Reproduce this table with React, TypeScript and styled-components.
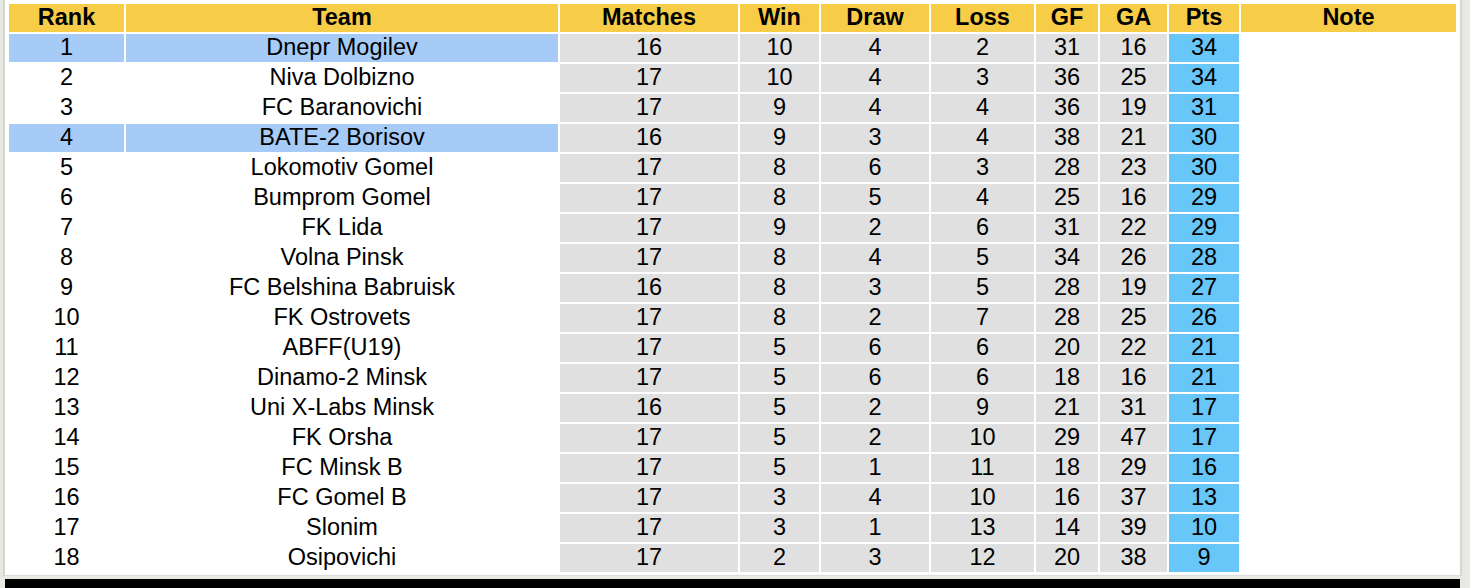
import React, { FC } from 'react';
import styled, { createGlobalStyle } from 'styled-components';

const GlobalStyle = createGlobalStyle`
  html, body {
    margin: 0;
    padding: 0;
    background: #e9e9e4;
    font-family: 'Liberation Sans', Arial, sans-serif;
  }
`;

const COLS = '115px 432px 178px 79px 108px 103px 62px 67px 70px 215px';

const Page = styled.div`
  width: 1459px;
  height: 588px;
  padding-left: 3px;
  overflow: hidden;
`;

const Panel = styled.div`
  background: #fff;
  border-left: 2px solid #d6d6d1;
  border-right: 2px solid #d6d6d1;
  border-bottom: 1px solid #dcdcd7;
  padding: 4px 4px 3px 4px;
`;

const Table = styled.div`
  display: grid;
  grid-template-columns: ${COLS};
  grid-auto-rows: 28px;
  gap: 2px;
`;

const HeadCell = styled.div`
  background: #f7cd47;
  color: #000;
  font-weight: bold;
  font-size: 23.5px;
  display: flex;
  align-items: center;
  justify-content: center;
  line-height: 1;
`;

type Tone = 'white' | 'blue' | 'gray' | 'pts';

const toneColor: Record<Tone, string> = {
  white: '#ffffff',
  blue: '#a6cbf7',
  gray: '#e0e0e0',
  pts: '#68c6f8',
};

const Cell = styled.div<{ $tone: Tone }>`
  background: ${({ $tone }) => toneColor[$tone]};
  color: #000;
  font-size: 23.5px;
  display: flex;
  align-items: center;
  justify-content: center;
  line-height: 1;
  white-space: nowrap;
`;

const Footer = styled.div`
  background: #000;
  height: 12px;
  margin: 3px 2px 0 2px;
`;

const headers = ['Rank', 'Team', 'Matches', 'Win', 'Draw', 'Loss', 'GF', 'GA', 'Pts', 'Note'];

// rank, team, matches, win, draw, loss, gf, ga, pts
const rows: [number, string, number, number, number, number, number, number, number][] = [
  [1, 'Dnepr Mogilev', 16, 10, 4, 2, 31, 16, 34],
  [2, 'Niva Dolbizno', 17, 10, 4, 3, 36, 25, 34],
  [3, 'FC Baranovichi', 17, 9, 4, 4, 36, 19, 31],
  [4, 'BATE-2 Borisov', 16, 9, 3, 4, 38, 21, 30],
  [5, 'Lokomotiv Gomel', 17, 8, 6, 3, 28, 23, 30],
  [6, 'Bumprom Gomel', 17, 8, 5, 4, 25, 16, 29],
  [7, 'FK Lida', 17, 9, 2, 6, 31, 22, 29],
  [8, 'Volna Pinsk', 17, 8, 4, 5, 34, 26, 28],
  [9, 'FC Belshina Babruisk', 16, 8, 3, 5, 28, 19, 27],
  [10, 'FK Ostrovets', 17, 8, 2, 7, 28, 25, 26],
  [11, 'ABFF(U19)', 17, 5, 6, 6, 20, 22, 21],
  [12, 'Dinamo-2 Minsk', 17, 5, 6, 6, 18, 16, 21],
  [13, 'Uni X-Labs Minsk', 16, 5, 2, 9, 21, 31, 17],
  [14, 'FK Orsha', 17, 5, 2, 10, 29, 47, 17],
  [15, 'FC Minsk B', 17, 5, 1, 11, 18, 29, 16],
  [16, 'FC Gomel B', 17, 3, 4, 10, 16, 37, 13],
  [17, 'Slonim', 17, 3, 1, 13, 14, 39, 10],
  [18, 'Osipovichi', 17, 2, 3, 12, 20, 38, 9],
];

const highlighted = [1, 4];

const App: FC = () => {
  return (
    <>
      <GlobalStyle />
      <Page>
        <Panel>
          <Table>
            {headers.map((h) => (
              <HeadCell key={h}>{h}</HeadCell>
            ))}
            {rows.map((r) => {
              const [rank, team, ...stats] = r;
              const nameTone: Tone = highlighted.includes(rank) ? 'blue' : 'white';
              const pts = stats[stats.length - 1];
              return (
                <React.Fragment key={rank}>
                  <Cell $tone={nameTone}>{rank}</Cell>
                  <Cell $tone={nameTone}>{team}</Cell>
                  {stats.slice(0, 6).map((v, i) => (
                    <Cell $tone="gray" key={i}>
                      {v}
                    </Cell>
                  ))}
                  <Cell $tone="pts">{pts}</Cell>
                  <Cell $tone="white" />
                </React.Fragment>
              );
            })}
          </Table>
        </Panel>
        <Footer />
      </Page>
    </>
  );
};

export default App;
